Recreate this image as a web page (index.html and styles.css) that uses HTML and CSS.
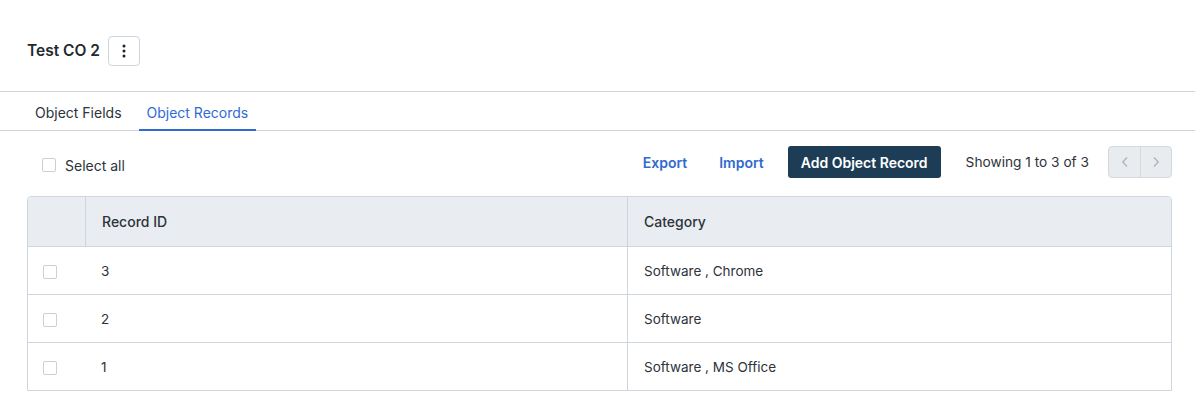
FILE: index.html
```html
<!DOCTYPE html>
<html lang="en">
<head>
    <meta charset="UTF-8">
    <title>Test CO 2 - Object Records</title>
    <link rel="stylesheet" href="styles.css">
</head>
<body>
    <div class="page-header">
        <h1 class="page-title">Test CO 2</h1>
        <button class="kebab-btn" type="button" aria-label="More actions">
            <svg width="4" height="14" viewBox="0 0 4 14"><circle cx="2" cy="2" r="1.5"/><circle cx="2" cy="7" r="1.5"/><circle cx="2" cy="12" r="1.5"/></svg>
        </button>
    </div>

    <div class="tabs">
        <a class="tab">Object Fields</a>
        <a class="tab active">Object Records</a>
    </div>

    <div class="content">
        <div class="toolbar">
            <label class="select-all"><span class="checkbox"></span>Select all</label>
            <div class="actions">
                <a class="link-btn">Export</a>
                <a class="link-btn">Import</a>
                <button class="primary-btn" type="button">Add Object Record</button>
                <span class="count">Showing 1 to 3 of 3</span>
                <div class="pager">
                    <button type="button" aria-label="Previous">
                        <svg width="8" height="12" viewBox="0 0 8 12"><path d="M6 1.5 1.8 6 6 10.5"/></svg>
                    </button>
                    <button type="button" aria-label="Next">
                        <svg width="8" height="12" viewBox="0 0 8 12"><path d="M2 1.5 6.2 6 2 10.5"/></svg>
                    </button>
                </div>
            </div>
        </div>

        <table class="records">
            <thead>
                <tr>
                    <th class="col-check"></th>
                    <th class="col-id">Record ID</th>
                    <th>Category</th>
                </tr>
            </thead>
            <tbody>
                <tr>
                    <td class="col-check"><span class="checkbox"></span></td>
                    <td class="col-id">3</td>
                    <td>Software , Chrome</td>
                </tr>
                <tr>
                    <td class="col-check"><span class="checkbox"></span></td>
                    <td class="col-id">2</td>
                    <td>Software</td>
                </tr>
                <tr>
                    <td class="col-check"><span class="checkbox"></span></td>
                    <td class="col-id">1</td>
                    <td>Software , MS Office</td>
                </tr>
            </tbody>
        </table>
    </div>
</body>
</html>
```

FILE: styles.css
```css
body {
    margin: 0;
    font-family: Inter, "Noto Sans", sans-serif;
    font-size: 14px;
    color: #2d3339;
    background: #fff;
}

.page-header {
    display: flex;
    align-items: center;
    gap: 8px;
    height: 92px;
    padding: 10px 27px 0;
    box-sizing: border-box;
    border-bottom: 1px solid #cdd5dd;
}
.page-title {
    margin: 0;
    font-size: 15.5px;
    font-weight: 600;
    color: #222a31;
}
.kebab-btn {
    display: flex;
    align-items: center;
    justify-content: center;
    width: 32px;
    height: 30px;
    padding: 0;
    background: #fff;
    border: 1px solid #cdd5dd;
    border-radius: 4px;
    fill: #1c232a;
}

.tabs {
    display: flex;
    gap: 9px;
    padding: 0 27px;
    height: 38px;
    border-bottom: 1px solid #cdd5dd;
}
.tab {
    display: flex;
    align-items: center;
    padding: 3px 8px 0;
    color: #2d3339;
    border-bottom: 2px solid transparent;
    margin-bottom: -1px;
}
.tab.active {
    color: #2f6ad8;
    border-bottom-color: #2f6ad8;
}

.content {
    padding: 15px 23px 0 27px;
}
.toolbar {
    display: flex;
    align-items: center;
    justify-content: space-between;
    height: 32px;
    margin-bottom: 18px;
}
.select-all {
    display: flex;
    align-items: center;
    gap: 9px;
    padding: 6px 0 0 15px;
    color: #2d3339;
}
.checkbox {
    display: inline-block;
    width: 12px;
    height: 12px;
    border: 1px solid #c7cfd7;
    border-radius: 2px;
    background: #fff;
}
.actions {
    display: flex;
    align-items: center;
}
.link-btn {
    color: #2f6ad0;
    font-weight: 600;
    margin-right: 32px;
}
.link-btn + .link-btn {
    margin-right: 24px;
}
.primary-btn {
    height: 32px;
    padding: 0 13px;
    background: #1d3c55;
    color: #fff;
    border: none;
    border-radius: 3px;
    font-family: inherit;
    font-size: 14px;
    font-weight: 600;
}
.count {
    margin: 0 19px 0 25px;
    font-size: 13.7px;
    color: #2d3339;
}
.pager {
    display: flex;
    height: 32px;
    border: 1px solid #d3d9df;
    border-radius: 4px;
    background: #e9ecef;
    box-sizing: border-box;
}
.pager button {
    width: 31px;
    display: flex;
    align-items: center;
    justify-content: center;
    background: none;
    border: none;
    padding: 0;
}
.pager button + button {
    border-left: 1px solid #d3d9df;
}
.pager svg path {
    fill: none;
    stroke: #aab3bc;
    stroke-width: 1.3;
}

.records {
    width: 1145px;
    border-collapse: separate;
    border-spacing: 0;
    border: 1px solid #cdd5dd;
    border-radius: 4px 4px 0 0;
}
.records th {
    height: 49px;
    background: #e9edf1;
    text-align: left;
    font-weight: 500;
    color: #2d3339;
    padding: 0 16px;
    border-bottom: 1px solid #cdd5dd;
}
.records th:first-child {
    border-top-left-radius: 4px;
}
.records th:last-child {
    border-top-right-radius: 4px;
}
.records td {
    height: 47px;
    padding: 0 16px;
    border-bottom: 1px solid #cdd5dd;
    font-size: 13.5px;
    color: #2d3339;
}
.records tbody tr:last-child td {
    border-bottom: none;
}
.records th + th,
.records td + td + td {
    border-left: 1px solid #cdd5dd;
}
.records .col-check {
    width: 26px;
    padding-left: 15px;
}
.records .col-id {
    width: 509px;
    padding-left: 16px;
}
.records td.col-check .checkbox {
    vertical-align: middle;
}
```
